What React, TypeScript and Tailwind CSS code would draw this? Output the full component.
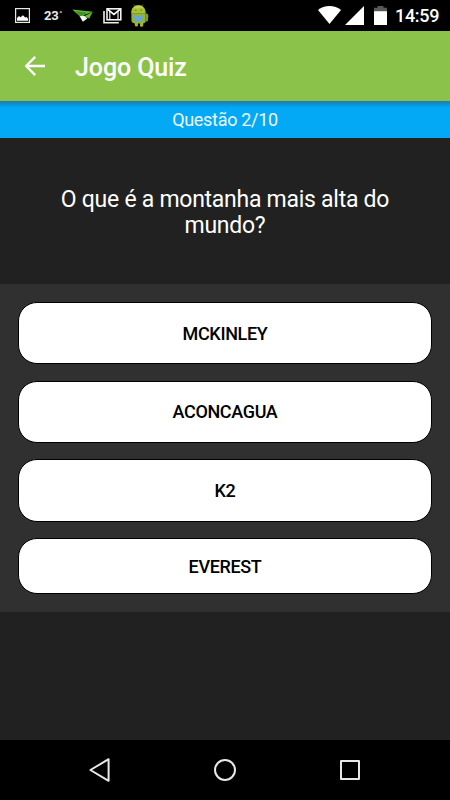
import { useState } from 'react'

const answers = [
  { label: 'MCKINLEY', size: 'h-[62px] mb-[17px] pt-[1px]' },
  { label: 'ACONCAGUA', size: 'h-[62px] mb-[16px] pb-[1px]' },
  { label: 'K2', size: 'h-[63px] mb-[16px]' },
  { label: 'EVEREST', size: 'h-[56px] pt-[1px]' },
]

function StatusBar() {
  return (
    <div className="flex h-[31px] flex-shrink-0 items-start bg-black text-white">
      {/* Notifications */}
      <svg className="ml-[15px] mt-[8px]" width="15" height="15" viewBox="0 0 15 15">
        <rect x="0.6" y="0.6" width="13.8" height="13.8" fill="none" stroke="#e8e8e8" strokeWidth="1.2" />
        <path d="M2 12.8V10l2-2 1.5 1.2L8 7.3l2.2 2.2L11.6 9l1.4 1.8v2z" fill="#fff" />
      </svg>
      <span className="ml-[14px] mt-[8px] flex w-[18px] items-start whitespace-nowrap text-[13px] font-bold leading-[16px] tracking-[-0.3px] text-[#e8e8e8]">
        23<span className="ml-[1px] text-[8px] leading-[12px]">°</span>
      </span>
      <svg className="ml-[10px] mt-[9px]" width="21" height="13" viewBox="0 0 21 13">
        <path d="M0.3 0.6 20.8 2.7 8 7.4z" fill="#69bd38" />
        <path d="M20.8 2.7 17.2 9.5 11.5 7.5z" fill="#62b532" />
        <path d="M3 2 16 3.8 8 7.4z" fill="#3f9226" />
        <path d="M7.6 7.2 11.6 6.6 15.4 9.4 10.8 12.7z" fill="#f0f7ed" />
      </svg>
      <svg className="ml-[10px] mt-[8px]" width="19" height="16" viewBox="0 0 19 16">
        <path d="M1 3v11.8h14.8" fill="none" stroke="#eee" strokeWidth="1.6" />
        <rect x="4" y="0.8" width="13.8" height="11" fill="none" stroke="#fff" strokeWidth="1.5" />
        <path d="M4.8 1.3 10.9 6.4 17 1.3" fill="none" stroke="#fff" strokeWidth="1.7" />
        <path d="M6.8 3v8.8M15 3v8.8" stroke="#fff" strokeWidth="1.1" />
      </svg>
      <svg className="ml-[9px] mt-[4px]" width="18" height="23" viewBox="0 0 18 23">
        <path d="M2.4 0.6 4.2 2.8M11.8 0.6 10.8 2.4" stroke="#5c7a2a" strokeWidth="0.9" />
        <path d="M0.2 9.5C0 3.8 3.4 0.9 7.4 0.9s7.3 2.9 7.3 8.6z" fill="#a9bf35" />
        <path d="M2.6 4.6C3.8 2.4 5.4 1.7 7.6 1.7s3.6 0.8 4.6 2.3z" fill="#c0d14f" />
        <circle cx="4.8" cy="6.3" r="0.7" fill="#5a721f" />
        <circle cx="10.3" cy="6.3" r="0.7" fill="#5a721f" />
        <path d="M0.4 9.2h14.2v7.6q0 2.6-2.8 2.6H3.8Q0.4 19.2 0.4 16z" fill="#91b32f" />
        <path d="M14.4 9.2q3 0 3 2.8l-0.6 5q-1.4 1.2-2.4 0z" fill="#7e9c2a" />
        <rect x="3.8" y="17.4" width="3.2" height="5" rx="1.5" fill="#9db634" />
        <rect x="9" y="17.4" width="3.2" height="5.4" rx="1.5" fill="#9db634" />
        <path d="M2 11.6 4 11.2 7.2 12.7 10.4 11.2 12.4 11.6 11.8 13.6 10 14.9 11.3 17 9.6 18 7.2 16.8 4.6 18 3.2 17 4.4 14.9 2.6 13.6z" fill="#65a5e6" />
      </svg>

      {/* System icons */}
      <svg className="ml-auto mt-[6px]" width="23" height="18" viewBox="0 0 23 18">
        <path d="M11.5 18 0 4C3.2 1.4 7.2 0 11.5 0S19.8 1.4 23 4z" fill="#fff" />
      </svg>
      <svg className="ml-[4px] mt-[6px]" width="19" height="19" viewBox="0 0 19 19">
        <path d="M19 0v19H0z" fill="#fff" />
      </svg>
      <svg className="ml-[10px] mt-[6px]" width="13" height="19" viewBox="0 0 13 19">
        <path d="M3.5 0h6v1.8H13v4H0v-4h3.5z" fill="#595959" />
        <path d="M0 5.2h13V19H0z" fill="#fff" />
      </svg>
      <span className="ml-[8px] mr-[10px] mt-[5px] w-[45px] whitespace-nowrap text-[18px] font-medium leading-[21px] tracking-[-0.3px]">14:59</span>
    </div>
  )
}

function NavBar() {
  return (
    <div className="flex h-[60px] flex-shrink-0 items-center justify-between bg-black px-[87px]">
      <button aria-label="Voltar">
        <svg width="26" height="26" viewBox="0 0 26 26">
          <path d="M21.6 2.2v21.6L3.4 13z" fill="none" stroke="#e8e8e8" strokeWidth="2" strokeLinejoin="round" />
        </svg>
      </button>
      <button aria-label="Início">
        <svg width="26" height="26" viewBox="0 0 26 26">
          <circle cx="13" cy="13" r="10" fill="none" stroke="#e8e8e8" strokeWidth="2" />
        </svg>
      </button>
      <button aria-label="Recentes">
        <svg width="26" height="26" viewBox="0 0 26 26">
          <rect x="4" y="4" width="18" height="18" fill="none" stroke="#e8e8e8" strokeWidth="2" strokeLinejoin="round" />
        </svg>
      </button>
    </div>
  )
}

export default function App() {
  const [selected, setSelected] = useState('')

  return (
    <div className="flex h-[800px] w-[450px] flex-col overflow-hidden bg-[#212121] font-[Roboto,sans-serif]">
      <StatusBar />

      {/* Toolbar */}
      <header className="flex h-[70px] flex-shrink-0 items-center bg-[#8bc34a] text-white">
        <button className="ml-[25px]" aria-label="Voltar">
          <svg width="20" height="20" viewBox="0 0 20 20">
            <path d="M20 10H2M10.2 0.9 1.1 10l9.1 9.1" fill="none" stroke="#fff" strokeWidth="2.4" />
          </svg>
        </button>
        <h1 className="ml-[30px] pt-[3px] text-[25px] font-medium leading-[30px] tracking-[-0.1px]">Jogo Quiz</h1>
      </header>

      <div className="flex h-[37px] flex-shrink-0 items-center justify-center bg-[#03a9f4] bg-[linear-gradient(to_bottom,#287caa_0px,#1588c3_2px,#0799dd_4px,#03a9f4_7px)] text-[18px] tracking-[-0.3px] text-[#f0f8fd]">
        Questão 2/10
      </div>

      <div className="flex h-[146px] flex-shrink-0 items-center justify-center px-12 pt-[3px] text-center text-[23px] leading-[26px] tracking-[-0.27px] text-white">
        O que é a montanha mais alta do mundo?
      </div>

      {/* Answers */}
      <div className="flex h-[328px] flex-shrink-0 flex-col bg-[#303030] px-[18px] pt-[18px]">
        {answers.map((answer) => (
          <button
            key={answer.label}
            onClick={() => setSelected(answer.label)}
            aria-pressed={selected === answer.label}
            className={`flex flex-shrink-0 items-center justify-center rounded-[19px] border border-black bg-white text-[18px] font-medium leading-[27px] tracking-[-0.35px] text-black ${answer.size}`}
          >
            {answer.label}
          </button>
        ))}
      </div>

      <div className="flex-1" />
      <NavBar />
    </div>
  )
}
